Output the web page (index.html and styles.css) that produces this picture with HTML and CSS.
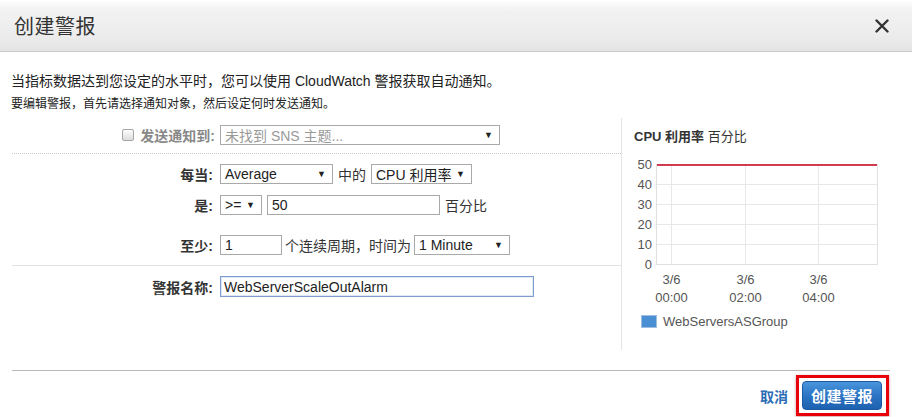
FILE: index.html
```html
<!DOCTYPE html>
<html lang="zh-CN">
<head>
    <meta charset="UTF-8">
    <title>创建警报</title>
    <link rel="stylesheet" href="styles.css">
</head>
<body>
    <div class="modal">
        <div class="modal-header">
            <h2 class="modal-title">创建警报</h2>
            <span class="close-btn">
                <svg width="14" height="14" viewBox="0 0 14 14"><path d="M1.5 1.5 L12.5 12.5 M12.5 1.5 L1.5 12.5" stroke="#333" stroke-width="2.4" stroke-linecap="round"/></svg>
            </span>
        </div>

        <div class="modal-body">
            <p class="intro">当指标数据达到您设定的水平时，您可以使用 CloudWatch 警报获取自动通知。</p>
            <p class="hint">要编辑警报，首先请选择通知对象，然后设定何时发送通知。</p>

            <div class="alarm-panel">
                <div class="alarm-form">
                    <div class="row row-notify">
                        <label class="label label-muted"><span class="checkbox"></span>发送通知到:</label>
                        <span class="select select-muted w-sns"><span>未找到 SNS 主题...</span><i>▼</i></span>
                    </div>
                    <div class="sep sep-dotted"></div>

                    <div class="row row-when">
                        <label class="label">每当:</label>
                        <span class="select w-stat"><span>Average</span><i>▼</i></span>
                        <span class="text">中的</span>
                        <span class="select w-metric"><span>CPU 利用率</span><i>▼</i></span>
                    </div>
                    <div class="row row-is">
                        <label class="label">是:</label>
                        <span class="select w-op"><span>&gt;=</span><i>▼</i></span>
                        <span class="input w-threshold">50</span>
                        <span class="text">百分比</span>
                    </div>
                    <div class="row row-least">
                        <label class="label">至少:</label>
                        <span class="input w-periods">1</span>
                        <span class="text text-tight">个连续周期，时间为</span>
                        <span class="select w-period"><span>1 Minute</span><i>▼</i></span>
                    </div>
                    <div class="sep"></div>

                    <div class="row row-name">
                        <label class="label">警报名称:</label>
                        <span class="input input-focus w-name">WebServerScaleOutAlarm</span>
                    </div>
                </div>

                <div class="alarm-chart">
                    <div class="chart-title"><strong>CPU 利用率</strong> 百分比</div>
                    <svg class="chart" width="290" height="158" viewBox="0 0 290 158">
                        <g stroke="#e8e8e8" stroke-width="1">
                            <line x1="34" y1="34.5" x2="255" y2="34.5"/>
                            <line x1="34" y1="54.5" x2="255" y2="54.5"/>
                            <line x1="34" y1="74.5" x2="255" y2="74.5"/>
                            <line x1="34" y1="94.5" x2="255" y2="94.5"/>
                            <line x1="49.5" y1="14" x2="49.5" y2="114"/>
                            <line x1="123.5" y1="14" x2="123.5" y2="114"/>
                            <line x1="196.5" y1="14" x2="196.5" y2="114"/>
                        </g>
                        <rect x="34.5" y="14.5" width="221" height="100" fill="none" stroke="#e0e0e0"/>
                        <line x1="35" y1="15" x2="255" y2="15" stroke="#c4001a" stroke-width="1.5"/>
                        <g class="axis-y" text-anchor="end">
                            <text x="30" y="19">50</text>
                            <text x="30" y="39">40</text>
                            <text x="30" y="59">30</text>
                            <text x="30" y="79">20</text>
                            <text x="30" y="99">10</text>
                            <text x="30" y="119">0</text>
                        </g>
                        <g class="axis-x" text-anchor="middle">
                            <text x="49.5" y="134">3/6</text>
                            <text x="49.5" y="152">00:00</text>
                            <text x="123.5" y="134">3/6</text>
                            <text x="123.5" y="152">02:00</text>
                            <text x="196.5" y="134">3/6</text>
                            <text x="196.5" y="152">04:00</text>
                        </g>
                    </svg>
                    <div class="legend"><span class="swatch"></span>WebServersASGroup</div>
                </div>
            </div>
        </div>

        <div class="modal-footer">
            <a class="cancel-link" href="#">取消</a>
            <span class="highlight"><button class="primary-btn">创建警报</button></span>
        </div>
    </div>
</body>
</html>
```

FILE: styles.css
```css
* {
    margin: 0;
    padding: 0;
    box-sizing: border-box;
}

body {
    background: #fff;
    font-family: "Liberation Sans", "Noto Sans CJK SC", sans-serif;
    color: #222;
    width: 912px;
    height: 417px;
    overflow: hidden;
}

/* Header */
.modal-header {
    height: 52px;
    display: flex;
    align-items: center;
    justify-content: space-between;
    padding: 0 23px 0 14px;
    background: linear-gradient(#ffffff 0%, #f2f2f2 20%, #ececec 70%, #e4e4e4 100%);
    border-bottom: 1px solid #c9c9c9;
}

.modal-title {
    font-size: 20px;
    font-weight: normal;
    color: #333;
    letter-spacing: 0.5px;
}

.close-btn {
    display: flex;
    width: 14px;
    height: 14px;
}

/* Body */
.modal-body {
    padding-top: 20px;
}

.intro {
    font-size: 14px;
    line-height: 18px;
    padding-left: 11px;
}

.hint {
    font-size: 12px;
    line-height: 16px;
    margin-top: 6px;
    padding-left: 11px;
}

.alarm-panel {
    display: flex;
    margin-top: 6px;
    height: 232px;
}

.alarm-form {
    width: 609px;
    margin-left: 12px;
}

.row {
    display: flex;
    align-items: center;
    height: 20px;
    font-size: 13px;
}

.row-notify { margin-top: 7px; }
.row-when { margin-top: 10px; }
.row-is { margin-top: 11px; }
.row-least { margin-top: 20px; }
.row-name { margin-top: 10px; height: 21px; }

.label {
    width: 201px;
    margin-right: 7px;
    display: flex;
    align-items: center;
    justify-content: flex-end;
    font-weight: bold;
    font-size: 14px;
    color: #333;
}

.label-muted {
    color: #888;
    margin-right: 5px;
    width: 203px;
}

.checkbox {
    width: 12px;
    height: 12px;
    border: 1px solid #a6a6a6;
    border-radius: 2px;
    background: linear-gradient(#fdfdfd, #dcdcdc);
    margin-right: 6px;
}

.sep {
    margin-top: 10px;
    border-top: 1px solid #e2e2e2;
}

.sep-dotted {
    margin-top: 8px;
    border-top: 1px dotted #c8c8c8;
}

.select,
.input {
    height: 20px;
    display: flex;
    align-items: center;
    border: 1px solid #a9a9a9;
    background: #fff;
    padding: 0 4px;
    font-size: 14px;
    color: #222;
    white-space: nowrap;
}

.select {
    justify-content: space-between;
}

.select i {
    font-style: normal;
    font-size: 9px;
    color: #222;
    margin-left: 4px;
    padding-right: 2px;
}

.select-muted {
    color: #999;
}

.input-focus {
    height: 21px;
    border-color: #7f9dcf;
    box-shadow: inset 0 0 0 1px rgba(160, 185, 225, 0.35);
    padding-left: 3px;
}

.w-sns { width: 280px; }
.w-stat { width: 113px; }
.w-metric { width: 101px; }
.w-op { width: 42px; }
.w-threshold { width: 173px; margin-left: 5px; }
.w-periods { width: 62px; }
.w-period { width: 96px; }
.w-name { width: 314px; }

.text {
    margin: 0 5px;
    font-size: 14px;
    color: #333;
}

.text-tight {
    margin: 0 3px;
}

/* Chart */
.alarm-chart {
    width: 291px;
    border-left: 1px solid #e4e4e4;
}

.chart-title {
    margin-top: 11px;
    padding-left: 12px;
    font-size: 13px;
    line-height: 16px;
    color: #333;
}

.chart {
    display: block;
    margin-top: 5px;
}

.chart text {
    font-family: "Liberation Sans", sans-serif;
    font-size: 13px;
    fill: #555;
}

.legend {
    display: flex;
    align-items: center;
    margin-top: 6px;
    padding-left: 19px;
    font-size: 13px;
    color: #555;
}

.swatch {
    width: 16px;
    height: 13px;
    background: #4a8fd3;
    border: 1px solid #9fbfe0;
    margin-right: 6px;
}

/* Footer */
.modal-footer {
    margin: 20px 22px 0 12px;
    border-top: 1px solid #b8b8b8;
    padding-top: 4px;
    display: flex;
    justify-content: flex-end;
    align-items: center;
    padding-right: 1px;
}

.cancel-link {
    font-size: 14px;
    font-weight: bold;
    color: #2b6cb5;
    text-decoration: none;
    margin-right: 8px;
}

.highlight {
    display: flex;
    border: 3px solid #e8000b;
    padding: 3px 4px 3px 3px;
    box-shadow: 0 1px 3px rgba(120, 0, 0, 0.4);
}

.primary-btn {
    width: 80px;
    height: 29px;
    border: 1px solid #1b5aa0;
    border-radius: 4px;
    background: linear-gradient(#4a95dd, #2a72c2 55%, #1d62b0);
    color: #fff;
    font-family: "Liberation Sans", "Noto Sans CJK SC", sans-serif;
    font-size: 15px;
    font-weight: bold;
    letter-spacing: 0.5px;
}
```
